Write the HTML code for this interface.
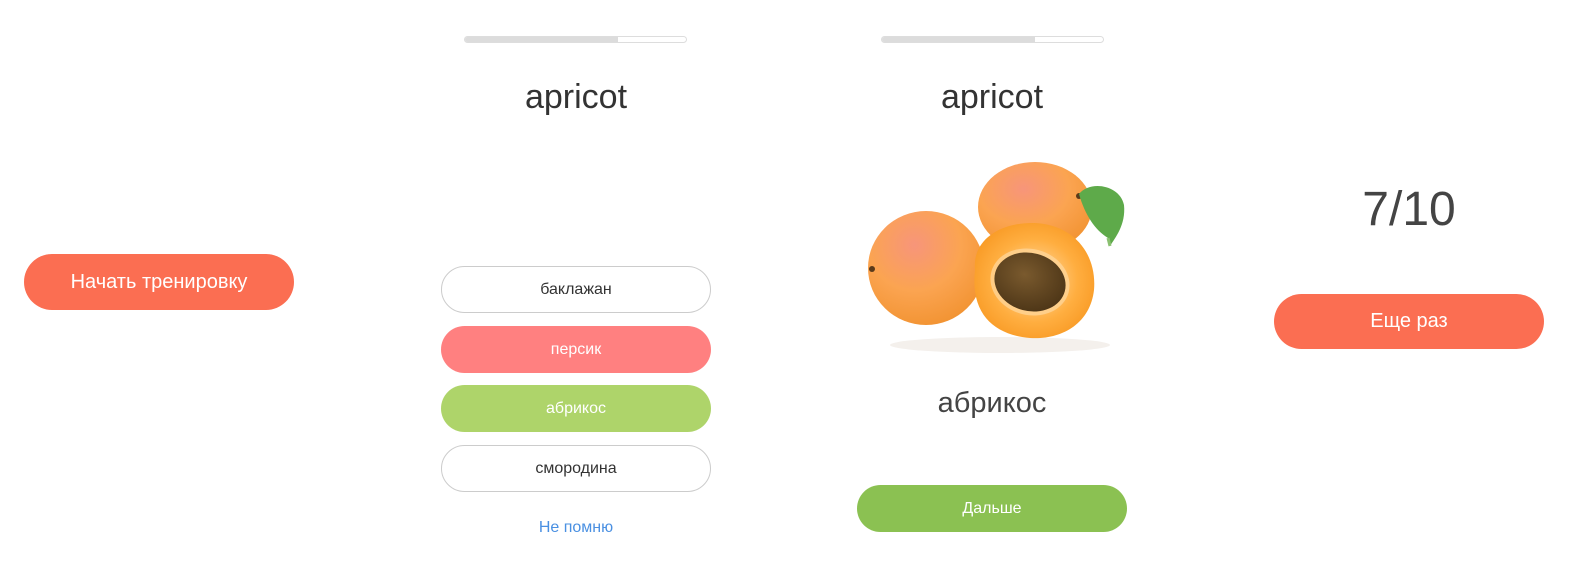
<!DOCTYPE html>
<html><head><meta charset="utf-8"><style>
body{margin:0;width:1580px;height:568px;background:#fff;position:relative;overflow:hidden;font-family:"Liberation Sans",sans-serif;}
.a{position:absolute;}
.btn{position:absolute;border-radius:28px;display:flex;align-items:center;justify-content:center;box-sizing:border-box;font-size:16px;}
.bar{position:absolute;height:7px;border:1px solid #ddd;border-radius:5px;box-sizing:border-box;overflow:hidden;}
.bar i{display:block;height:100%;background:#dcdcdc;}
.t{position:absolute;text-align:center;color:#333;}
</style></head><body>
<div class="btn" style="left:24px;top:254px;width:270px;height:56px;background:#fb6e52;color:#fff;font-size:20px;">Начать тренировку</div>

<div class="bar" style="left:464px;top:36px;width:223px;"><i style="width:153px"></i></div>
<div class="t" style="left:441px;top:78px;width:270px;font-size:34px;">apricot</div>
<div class="btn" style="left:441px;top:266px;width:270px;height:47px;border:1px solid #ccc;color:#333;">баклажан</div>
<div class="btn" style="left:441px;top:326px;width:270px;height:47px;background:#ff8080;color:#fff;">персик</div>
<div class="btn" style="left:441px;top:385px;width:270px;height:47px;background:#aed46a;color:#fff;">абрикос</div>
<div class="btn" style="left:441px;top:445px;width:270px;height:47px;border:1px solid #ccc;color:#333;">смородина</div>
<div class="t" style="left:441px;top:519px;width:270px;font-size:16px;color:#4a90e2;">Не помню</div>

<div class="bar" style="left:881px;top:36px;width:223px;"><i style="width:153px"></i></div>
<div class="t" style="left:857px;top:78px;width:270px;font-size:34px;">apricot</div>
<svg class="a" style="left:840px;top:150px" width="300" height="210" viewBox="840 150 300 210">
<defs>
<radialGradient id="g1" cx="0.4" cy="0.3" r="0.8"><stop offset="0" stop-color="#f7957a"/><stop offset="0.5" stop-color="#fba451"/><stop offset="1" stop-color="#f0902c"/></radialGradient>
<radialGradient id="g2" cx="0.5" cy="0.5" r="0.6"><stop offset="0" stop-color="#ffe0b0"/><stop offset="0.6" stop-color="#ffae40"/><stop offset="1" stop-color="#f7961f"/></radialGradient>
<radialGradient id="g3" cx="0.4" cy="0.4" r="0.7"><stop offset="0" stop-color="#7a5a2e"/><stop offset="1" stop-color="#4a3315"/></radialGradient>
</defs>
<ellipse cx="1000" cy="345" rx="110" ry="8" fill="#f4f0ec"/>
<ellipse cx="1035" cy="207" rx="57" ry="45" fill="url(#g1)"/>
<circle cx="1079" cy="196" r="3" fill="#5a3a1a"/>
<path d="M1079 194 C1090 180 1120 185 1124 205 C1126 225 1115 238 1110 246 L1108 238 C1095 230 1085 215 1079 194Z" fill="#5eaa4a"/>
<path d="M1108 238 L1110 246" stroke="#8ac070" stroke-width="3"/>
<ellipse cx="926" cy="268" rx="58" ry="57" fill="url(#g1)"/>
<circle cx="872" cy="269" r="3" fill="#5a3a1a"/>
<path d="M975 270 C972 240 1000 222 1035 223 C1075 225 1097 255 1094 290 C1090 325 1060 340 1030 338 C995 335 970 315 975 270Z" fill="url(#g2)"/>
<ellipse cx="1030" cy="282" rx="40" ry="33" transform="rotate(15 1030 282)" fill="#ffd9a0" opacity="0.7"/>
<ellipse cx="1030" cy="282" rx="36" ry="29" transform="rotate(15 1030 282)" fill="url(#g3)"/>
</svg>
<div class="t" style="left:857px;top:387px;width:270px;font-size:29px;color:#444;">абрикос</div>
<div class="btn" style="left:857px;top:485px;width:270px;height:47px;background:#8bc152;color:#fff;">Дальше</div>

<div class="t" style="left:1274px;top:182px;width:270px;font-size:48px;color:#444;">7/10</div>
<div class="btn" style="left:1274px;top:294px;width:270px;height:55px;background:#fb6e52;color:#fff;font-size:20px;">Еще раз</div>
</body></html>
